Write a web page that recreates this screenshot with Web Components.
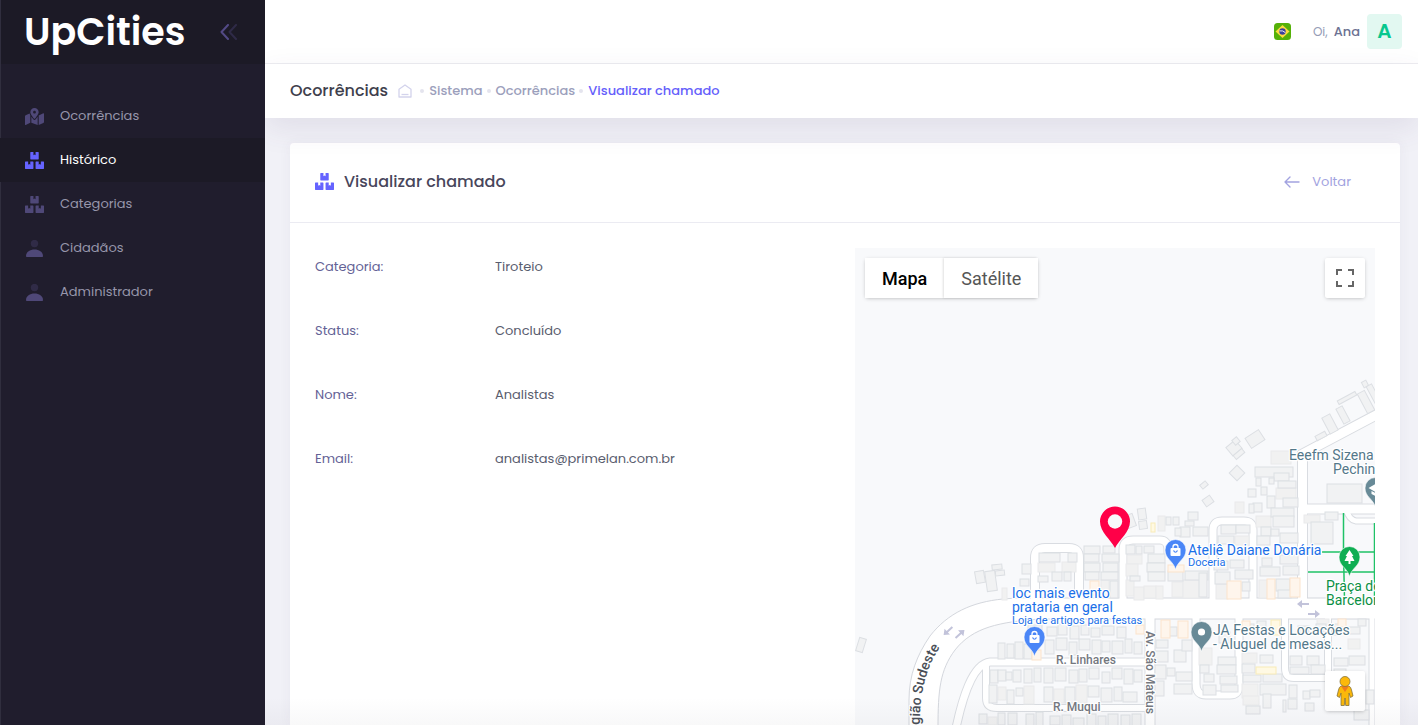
<!DOCTYPE html>
<html lang="pt-BR">
<head>
<meta charset="utf-8">
<meta name="viewport" content="width=device-width, initial-scale=1">
<title>UpCities - Visualizar chamado</title>
<style>
  body { margin: 0; background: #f1f1f7; font-family: Poppins, Inter, "Open Sans", sans-serif; font-size: 13px; line-height: 20px; color: #595d6e; }
</style>
</head>
<body>
<up-app>
  <up-sidebar slot="aside">
    <up-nav-item icon="map" label="Ocorrências"></up-nav-item>
    <up-nav-item icon="boxes" label="Histórico" active></up-nav-item>
    <up-nav-item icon="boxes" label="Categorias"></up-nav-item>
    <up-nav-item icon="user" label="Cidadãos"></up-nav-item>
    <up-nav-item icon="user" label="Administrador"></up-nav-item>
  </up-sidebar>
  <up-topbar slot="top" name="Ana"></up-topbar>
  <up-subheader slot="top"></up-subheader>
  <up-card heading="Visualizar chamado">
    <up-fields></up-fields>
    <up-map></up-map>
  </up-card>
</up-app>

<script>
const define = (name, html, setup) => {
  const tpl = document.createElement('template');
  tpl.innerHTML = html;
  customElements.define(name, class extends HTMLElement {
    connectedCallback() {
      if (this.shadowRoot) return;
      const root = this.attachShadow({ mode: 'open' });
      root.append(tpl.content.cloneNode(true));
      if (setup) setup(this, root);
    }
  });
};

const ICONS = {
  boxes: ['0 0 576 512', '<path d="M560 288h-80v96l-32-21.3-32 21.3v-96h-80c-8.8 0-16 7.2-16 16v192c0 8.8 7.2 16 16 16h224c8.8 0 16-7.2 16-16V304c0-8.8-7.2-16-16-16zm-384-64h224c8.8 0 16-7.2 16-16V16c0-8.8-7.2-16-16-16h-80v96l-32-21.3L256 96V0h-80c-8.8 0-16 7.2-16 16v192c0 8.8 7.2 16 16 16zm64 64h-80v96l-32-21.3L96 384v-96H16c-8.8 0-16 7.2-16 16v192c0 8.8 7.2 16 16 16h224c8.8 0 16-7.2 16-16V304c0-8.8-7.2-16-16-16z"/>'],
  map: ['0 0 576 512', '<path d="M288 0c-69.59 0-126 56.41-126 126 0 56.26 82.35 158.8 113.9 196.02 6.39 7.54 17.82 7.54 24.2 0C331.65 284.8 414 182.26 414 126 414 56.41 357.59 0 288 0zm0 168c-23.2 0-42-18.8-42-42s18.8-42 42-42 42 18.8 42 42-18.8 42-42 42zM20.12 215.95A32.006 32.006 0 0 0 0 245.66v250.32c0 11.32 11.43 19.06 21.94 14.86L160 448V214.92c-8.84-15.98-16.07-31.54-21.25-46.42L20.12 215.95zM288 359.67c-14.07 0-27.38-6.18-36.51-16.96-19.66-23.2-40.57-49.62-59.49-76.72v182l192 64V266c-18.92 27.09-39.82 53.52-59.49 76.72-9.13 10.77-22.44 16.95-36.51 16.95zm266.06-198.51L416 224v288l139.88-55.95A31.996 31.996 0 0 0 576 426.34V176.02c0-11.32-11.43-19.06-21.94-14.86z"/>'],
  user: ['0 0 19 17', '<circle cx="9.5" cy="3.6" r="3.7" opacity=".35"/><path d="M1 16.2C1 12 5 9.6 9.5 9.6S18 12 18 16.2c0 .5-.3.8-.8.8H1.800C1.300 17 1 16.700 1 16.200z"/>']
};
define('up-icon', `<style>:host{display:block;width:19px;height:17px;flex:none}svg{display:block;width:100%;height:100%;fill:currentColor}</style><svg aria-hidden="true"></svg>`,
  (el, root) => {
    const [box, body] = ICONS[el.getAttribute('name')];
    const svg = root.querySelector('svg');
    svg.setAttribute('viewBox', box);
    svg.innerHTML = body;
  });

define('up-app', `<style>
  :host{display:grid;grid-template-columns:265px minmax(0,1fr);height:100vh;overflow:hidden}
  ::slotted(up-sidebar){position:relative;z-index:4}
  .page{display:flex;flex-direction:column;min-width:0;min-height:0;position:relative}
  .page::after{content:"";position:absolute;z-index:3;left:0;right:0;bottom:0;height:28px;background:linear-gradient(transparent,rgba(40,40,60,.03));pointer-events:none}
  main{flex:1;min-height:0;padding:25px 18px 0 25px;display:flex;flex-direction:column}
  ::slotted(up-card){flex:1;min-height:0}
</style>
<slot name="aside"></slot>
<div class="page"><slot name="top"></slot><main><slot></slot></main></div>`);

define('up-sidebar', `<style>
  :host{display:flex;flex-direction:column;background:#201d2d;box-shadow:inset 1px 0 #302e3e}
  .brand{display:flex;align-items:center;justify-content:space-between;height:64px;padding:0 27px 0 24px;background:#1c1a26;box-shadow:inset 1px 0 #302e3e}
  .logo{color:#fff;font:600 38px/56px Poppins,Inter,sans-serif;text-decoration:none}
  button{border:0;background:none;padding:0;display:block;cursor:pointer}
  button svg{display:block}
  nav{padding-top:30px;display:flex;flex-direction:column}
</style>
<div class="brand"><a class="logo" href="#">UpCities</a>
<button aria-label="Recolher menu"><svg width="18" height="16" viewBox="0 0 18 16" fill="none" stroke="#534a86" stroke-width="2" stroke-linecap="round" stroke-linejoin="round"><path d="M8 1 1.500 8 8 15"/><path d="M16 1 9.500 8 16 15" opacity=".35"/></svg></button></div>
<nav aria-label="Menu"><slot></slot></nav>`);

define('up-nav-item', `<style>
  :host{display:block}
  a{display:flex;align-items:center;gap:16px;height:44px;padding-left:25px;color:#9796ab;text-decoration:none}
  up-icon{color:#4f4878}
  :host([active]) a{background:#1c1a26;color:#fff}
  :host([active]) up-icon{color:#6563ff}
</style><a href="#"></a>`, (el, root) => {
    const a = root.querySelector('a');
    const icon = document.createElement('up-icon');
    icon.setAttribute('name', el.getAttribute('icon'));
    const text = document.createElement('span');
    text.textContent = el.getAttribute('label');
    a.append(icon, text);
    if (el.hasAttribute('active')) a.setAttribute('aria-current', 'page');
  });

define('up-topbar', `<style>
  :host{display:flex;justify-content:flex-end;align-items:center;gap:22px;height:63px;padding-right:16px;background:#fff;border-bottom:1px solid #ededf1}
  button{border:0;background:none;padding:0;font:inherit;cursor:pointer;display:flex;align-items:center}
  .hi{color:#959cb6;font-size:12px;margin-right:6px}
  .name{color:#6c7293;font-weight:500;margin-right:7px}
  .avatar{width:35px;height:35px;border-radius:4px;background:#e2f8f1;color:#08c78e;font-weight:600;font-size:20px;line-height:35px;text-align:center}
</style>
<button aria-label="Idioma: português"><svg width="17" height="17" viewBox="0 0 17 17"><rect width="17" height="17" rx="3.500" fill="#55b108"/><path d="M8.500 2 15.500 8.500 8.500 15 1.500 8.500z" fill="#fcdc3f"/><circle cx="8.500" cy="8.500" r="3.200" fill="#3b3f9c"/><path d="M5.500 7.900q3.500-.8 5.900 1.800" fill="none" stroke="#fff" stroke-width=".9"/></svg></button>
<button><span class="hi">Oi,</span><span class="name"></span><span class="avatar"></span></button>`, (el, root) => {
    const name = el.getAttribute('name');
    root.querySelector('.name').textContent = name;
    root.querySelector('.avatar').textContent = name[0];
  });

define('up-subheader', `<style>
  :host{display:flex;align-items:center;height:54px;padding-left:25px;background:#fff;box-shadow:0 10px 30px rgba(82,63,105,.1);position:relative;z-index:2}
  h1{margin:0 10px 0 0;font-size:16px;font-weight:500;color:#3f3f4d}
  ol{display:flex;align-items:center;gap:4px;list-style:none;margin:0;padding:0;font-weight:500}
  li{display:flex;align-items:center;gap:5px}
  li+li::before{content:"";width:4px;height:4px;border-radius:50%;background:#e4e4ee}
  a{color:#9c9fbc;text-decoration:none}
  a[aria-current]{color:#665ffb}
  li:first-child{margin-right:4px}
  svg{display:block}
</style>
<h1>Ocorrências</h1>
<nav aria-label="Trilha"><ol>
<li><a href="#" aria-label="Início"><svg width="14" height="14" viewBox="0 0 14 14" fill="none" stroke="#d3d3ec" stroke-width="1.300" stroke-linejoin="round"><path d="M1 5.200 7 1l6 4.200V13H1z"/><path d="M3.500 10.500h7"/></svg></a></li>
<li><a href="#">Sistema</a></li><li><a href="#">Ocorrências</a></li><li><a href="#" aria-current="page">Visualizar chamado</a></li></ol></nav>`);

define('up-card', `<style>
  :host{display:flex;flex-direction:column;background:#fff;border-radius:4px 4px 0 0;box-shadow:0 0 13px rgba(82,63,105,.05)}
  header{display:flex;align-items:center;box-sizing:border-box;height:80px;padding:0 25px 2px;border-bottom:1px solid #ebebf2}
  up-icon{color:#6563ff;margin-right:10px}
  h2{flex:1;margin:0;font-size:16px;font-weight:500;color:#48465b}
  a{display:flex;align-items:center;gap:12px;margin-right:24px;color:#a2a3e0;text-decoration:none}
  section{flex:1;min-height:0;display:grid;grid-template-columns:1fr 1fr;gap:20px;padding:25px 25px 0}
</style>
<header><up-icon name="boxes"></up-icon><h2></h2>
<a href="#"><svg width="16" height="12" viewBox="0 0 16 12" fill="none" stroke="currentColor" stroke-width="1.400" stroke-linecap="round" stroke-linejoin="round"><path d="M6 1 1 6l5 5M1 6h14"/></svg><span>Voltar</span></a></header>
<section><slot></slot></section>`, (el, root) => { root.querySelector('h2').textContent = el.getAttribute('heading'); });

define('up-fields', `<style>
  :host{display:block}
  dl{margin:0;display:grid;gap:26px}
  div{display:grid;grid-template-columns:180px 1fr;align-items:center;height:38px}
  dt{color:#646296}
  dd{margin:0;color:#595d6e}
</style>
<dl><div><dt>Categoria:</dt><dd>Tiroteio</dd></div><div><dt>Status:</dt><dd>Concluído</dd></div><div><dt>Nome:</dt><dd>Analistas</dd></div><div><dt>Email:</dt><dd>analistas@primelan.com.br</dd></div></dl>`);

/* Building footprints: x, y, width, height, grouped by colour. */
const HOUSES = `1255 467 38 10,1274 473 15 8,1256 478 5 8,1269 478 5 6,1278 481 18 7,1248 489 8 8,1261 487 6 8,1267 496 8 12,1283 498 15 9,1253 503 9 9,1249 504 5 9,1271 508 23 9,1273 516 21 11,1188 512 10 8,1185 521 9 5,1180 527 10 10,1193 527 15 9,1221 525 15 9,1236 525 14 8,1261 527 10 9,1280 533 18 10,1327 484 35 19,1325 512 13 8,1311 522 22 22,1218 536 16 8,1257 536 13 9,1271 529 8 7,1214 561 14 9,1230 560 14 8,1235 570 18 9,1215 572 15 12,1242 582 8 9,1262 558 10 8,1280 555 18 9,1260 567 20 9,1283 566 16 9,1276 579 14 12,1278 590 13 8,1168 571 15 10,1185 571 23 9,1199 573 8 24,1022 564 9 10,1020 579 9 7,1039 553 21 9,1068 553 9 9,1038 576 10 6,1052 572 10 9,1064 572 7 9,1084 546 16 8,1103 546 12 7,1084 554 15 8,1102 554 17 8,1084 563 16 9,1103 563 15 9,1085 572 14 8,1101 572 17 8,1110 581 8 17,1126 545 9 9,1136 546 6 8,1144 546 10 7,1148 554 17 9,1147 563 18 9,1130 576 10 5,1148 572 17 9,1166 517 5 8,1173 517 6 8,1175 528 6 8,998 643 7 16,1007 644 7 14,1015 642 8 17,1024 644 8 15,1028 625 14 8,1047 627 10 9,1058 624 9 11,1070 626 9 13,1081 625 8 10,1091 628 9 9,1102 626 12 9,1117 627 9 11,1045 640 9 14,1056 638 11 12,1069 642 8 13,1079 639 11 11,1092 640 9 14,1102 641 8 11,1112 641 11 13,1125 639 7 14,1134 642 8 12,990 670 8 13,998 670 8 11,1006 672 6 8,1013 670 8 12,1024 669 8 14,1034 668 7 14,1044 668 9 15,1055 668 11 13,1069 670 9 13,1079 669 8 13,1089 668 10 11,1102 672 8 11,1112 668 10 11,1124 669 9 15,1134 670 8 12,989 685 8 18,1007 690 7 14,1016 688 7 8,1044 687 9 15,1065 687 10 16,1088 686 11 11,1101 688 11 14,1114 687 8 14,1123 692 14 10,979 714 8 10,998 713 7 12,1008 713 9 12,1026 714 8 12,1036 712 7 14,1050 716 10 9,1062 715 9 12,1073 718 11 8,1087 714 9 12,1098 716 8 10,1108 714 10 12,1121 715 9 11,1132 714 9 12,1156 640 12 8,1168 627 9 9,1155 651 13 11,1174 650 12 12,1155 665 11 14,1155 681 9 15,1167 668 8 8,1176 672 16 9,1174 684 18 10,1182 640 10 11,1200 665 9 8,1204 674 10 8,1218 657 18 8,1217 665 19 9,1220 676 17 8,1203 685 13 10,1221 685 17 7,1219 632 11 11,1246 624 8 10,1257 621 9 8,1260 655 13 8,1242 664 13 9,1243 675 18 7,1263 674 19 8,1260 684 26 11,1246 706 14 8,1263 694 8 14,1283 700 3 12,1289 685 8 13,1288 699 9 10,1303 691 7 8,1310 690 10 7,1305 703 9 8,1290 656 12 9,1307 656 12 9,1290 667 19 7,1311 665 14 9,1298 626 11 7,1316 624 10 8,1332 624 8 11,1347 627 13 7,1358 619 8 7,1334 658 14 8,1349 656 16 9,1334 669 12 9,1354 710 15 10,1366 690 8 14`;
const PLAIN = `1271 451 20 13,1276 488 20 11,1235 502 9 11,1256 516 15 11,1304 515 16 8,1235 536 14 9,1216 584 12 15,1259 580 10 18,1172 582 11 15,1183 580 18 18,1038 563 17 9,1062 562 14 10,1002 588 5 12,1101 580 8 18,1127 555 15 9,1126 564 12 12,1126 580 8 16,1134 587 10 13,1144 586 12 12,1156 586 7 13,1158 516 7 15,998 687 8 13,1024 686 10 18,1054 689 10 14,1076 685 11 18,988 717 9 8,1199 648 13 17,1242 684 16 14,1243 696 16 9,1242 653 15 10,1348 639 12 10,1317 619 12 9`;
const WARM = `1227 581 14 18,1267 579 8 20,1290 578 10 19,1090 581 9 14,1168 565 16 7,1136 625 8 9,1161 620 9 18,1178 621 10 17,1242 621 8 9,1338 619 8 8,1032 650 9 10`;
const YELLOW = `1151 523 4 9,1271 620 9 15,1256 667 20 7`;
/* Turned footprints: centre x, centre y, width, height, angle. */
const TURNED = `1255 439 16 12 -33,1234 448 12 11 -40,1239 454 11 5 -40,1236 441 6 6 -40,1237 473 11 11 45,1204 485 7 5 -40,1208 501 9 8 -35,1321 436 11 5 -28,1330 424 9 18 -28,1343 415 7 17 -28,1347 398 20 4 -28,1365 384 5 6 -28,1366 402 8 22 -28,1374 395 6 22 -28,980 577 9 12 -10,991 581 10 20 -8,997 567 10 5 -6,1000 573 9 5 -6,1142 514 8 11 -8,1143 525 8 8 -8,1130 521 9 13 -20,861 645 7 14 17`;
const rects = (list, fill, stroke) => list.split(',').map(r => {
  const [x, y, w, h] = r.split(' ').map(Number);
  return `<rect x="${x}" y="${y}" width="${w}" height="${h}" fill="${fill}" stroke="${stroke}"/>`;
}).join('');
const turned = TURNED.split(',').map(r => {
  const [x, y, w, h, a] = r.split(' ').map(Number);
  return `<rect x="${x - w / 2}" y="${y - h / 2}" width="${w}" height="${h}" fill="#f1f2f3" stroke="#dcdfe3" transform="rotate(${a} ${x} ${y})"/>`;
}).join('');
const STREETS = [
  [8, 'M1035 604V558Q1035 548 1045 548H1069Q1079 548 1079 558V604'],
  [7, 'M1123 604V550Q1123 540 1133 540H1160Q1168 540 1168 550V560'],
  [7, 'M1213 604V530Q1213 521 1222 521H1244Q1253 521 1253 530V604'],
  [9, 'M1302.500 604V454L1378 414'], [9, 'M1302 509H1378'], [5, 'M1346 509Q1349 520 1356 521H1378'],
  [7, 'M956 728C962 700 972 664 990 662H1150'], [6, 'M986 664V698Q986 708 997 708H1150'],
  [9, 'M1150 616V728'], [7, 'M1196 616V684Q1196 695 1206 695H1230Q1239 695 1239 685V616'],
  [6, 'M1285 616V668Q1285 678 1294 678H1328V616'], [5, 'M1372 616V728']
];
const AVENUE = 'M909 728V700C909 675 917 655 930 636C948 613 972 602 1003 599Q1020 597 1040 598H1378V619H1040C1000 622 973 627 955 650C940 670 938 690 938 728Z';
const pin = (x, y, fill, glyph) => `<g transform="translate(${x} ${y})"><path d="M0 16.500C-2 8-10.500 6-10.500-3A10.500 10.500 0 0 1 10.500-3C10.500 6 2 8 0 16.500Z" fill="${fill}" stroke="#fff" stroke-width=".6"/>${glyph}</g>`;
const BAG = '<rect x="-5" y="-5" width="10" height="8" rx="1" fill="#fff"/><path d="M-2.500-5v-1a2.500 2.500 0 0 1 5 0v1" fill="none" stroke="#fff" stroke-width="1.300"/><path d="M-2-2.500q2 3.500 4 0" fill="none" stroke="#4a86f7" stroke-width="1.200"/>';
const arrow = (x, y, a) => `<path d="M-6-1H1V-4L6 0 1 4V1H-6z" fill="#c2c3da" transform="translate(${x} ${y}) rotate(${a})"/>`;

const MAP_SVG = `<svg class="tiles" viewBox="855 248 520 477" preserveAspectRatio="xMinYMin slice" role="img" aria-label="Mapa do chamado">
<rect x="855" y="248" width="1200" height="1200" fill="#f8f9fb"/>
${STREETS.map(([w, d]) => `<path d="${d}" fill="none" stroke="#d9dce1" stroke-width="${w + 2}"/>`).join('')}
<path d="${AVENUE}" fill="#fff" stroke="#d4d7dd"/>
${STREETS.map(([w, d]) => `<path d="${d}" fill="none" stroke="#fff" stroke-width="${w}"/>`).join('')}
${rects(PLAIN, '#f1f1f1', '#e9eaeb')}${rects(HOUSES, '#f1f2f3', '#dcdfe3')}${rects(WARM, '#fef5ec', '#fbe3cc')}${rects(YELLOW, '#fff9e3', '#f8ebb8')}${turned}
<path d="M1343.500 513V552l1 48M1374.500 523V600M1322 552H1376M1308 572H1376" fill="none" stroke="#1fc267" stroke-width="1.500"/>
${arrow(948, 631, 137)}${arrow(960, 634, -42)}${arrow(1303, 604, 180)}${arrow(1314, 614, 0)}
<path id="curve" d="M920 765V716C921 690 926 668 940 647" fill="none"/>
<g font-family="Roboto, sans-serif" paint-order="stroke" stroke="#fff" stroke-width="2.500" stroke-linejoin="round">
<g font-size="14" fill="#54788a"><text x="1289" y="460">Eeefm Sizena</text><text x="1333" y="474">Pechin</text><text x="1213" y="635">JA Festas e Locações</text><text x="1213" y="649">- Aluguel de mesas...</text></g>
<g font-size="14" fill="#1a6fe8"><text x="1188" y="555">Ateliê Daiane Donária</text><text x="1012" y="598">loc mais evento</text><text x="1012" y="612">prataria en geral</text></g>
<g font-size="11" fill="#1a6fe8"><text x="1188" y="566">Doceria</text><text x="1012" y="624">Loja de artigos para festas</text></g>
<g font-size="14" fill="#0b8f45"><text x="1326" y="591">Praça de</text><text x="1326" y="605">Barcelon</text></g>
<g font-size="12" font-weight="500" fill="#74787f"><text x="1056" y="664">R. Linhares</text><text x="1053" y="711">R. Muqui</text><text transform="translate(1146 631) rotate(90)">Av. São Mateus</text></g>
<text font-size="14" font-weight="500" fill="#4a4f57" text-anchor="end"><textPath href="#curve" startOffset="100%">Região Sudeste</textPath></text>
</g>
${pin(1175.500, 553, '#4a86f7', BAG)}${pin(1034.500, 640, '#4a86f7', BAG)}
${pin(1201.500, 635, '#688a97', '<circle cy="-3" r="3.600" fill="#fff"/>')}
${pin(1375.500, 491, '#688a97', '<path d="M-7-3 0-7 7-3 0 1zM-4 0v3l4 2 4-2V0L0 2z" fill="#fff"/>')}
${pin(1349.500, 560, '#0fae53', '<path d="M0-10 4-4H2.500L5 1H1V4H-1V1H-5L-2.500-4H-4z" fill="#fff"/>')}
<path d="M1115 548C1111 540 1100 532 1100 521.500A15 15 0 0 1 1130 521.500C1130 532 1119 540 1115 548Z" fill="#ff0048"/><circle cx="1115" cy="521.500" r="7.200" fill="#f8f9fb"/>
</svg>`;

define('up-map', `<style>
  :host{display:block;position:relative;overflow:hidden;background:#f8f9fb;font-family:Roboto,sans-serif;min-height:0}
  .tiles{position:absolute;inset:0;width:100%;height:100%}
  button{border:0;background:#fff;margin:0;height:40px;font:18px/38px Roboto,sans-serif;color:#565656;cursor:pointer}
  .types{position:absolute;left:10px;top:10px;display:flex;border-radius:2px;box-shadow:0 1px 4px -1px rgba(0,0,0,.3)}
  .types button{padding:2px 17px 0}
  .types button+button{box-shadow:-1px 0 2px rgba(0,0,0,.12)}
  .types [aria-pressed=true]{font-weight:500;color:#000}
  .tool{position:absolute;right:10px;width:40px;padding:0;display:grid;place-items:center;border-radius:2px;box-shadow:0 1px 4px -1px rgba(0,0,0,.3)}
  .full{top:10px}
  .peg{bottom:14px}
</style>${MAP_SVG}
<div class="types"><button aria-pressed="true">Mapa</button><button aria-pressed="false">Satélite</button></div>
<button class="tool full" aria-label="Tela cheia"><svg width="18" height="18" viewBox="0 0 18 18" fill="none" stroke="#666" stroke-width="2"><path d="M1 6V1H6M12 1H17V6M17 12V17H12M6 17H1V12"/></svg></button>
<button class="tool peg" aria-label="Street View"><svg width="18" height="30" viewBox="0 0 18 30" fill="#fbb80a" stroke="#84733f" stroke-width=".8" stroke-linejoin="round"><path d="M5 10H13Q15 11 15.500 14L17 20 14.500 21.500 13 17V29.500H9.700L9 22 8.300 29.500H5V17L3.500 21.500 1 20 2.500 14Q3 11 5 10Z"/><path d="M5 10H13L9 16Z" fill="#f07b1d" stroke="none"/><circle cx="9" cy="5.500" r="5"/></svg></button>`);
</script>
</body>
</html>
